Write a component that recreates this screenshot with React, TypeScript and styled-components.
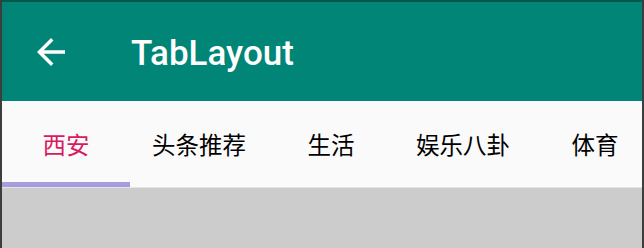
import React from "react";
import styled, { createGlobalStyle } from "styled-components";

const Global = createGlobalStyle`
  html, body { margin: 0; padding: 0; background: #cccccc; }
  body { font-family: Roboto, "Noto Sans CJK SC", sans-serif; }
`;

const Frame = styled.div`
  width: 644px;
  height: 248px;
  box-sizing: border-box;
  border-left: 2px solid #3d3d3d;
  border-right: 2px solid #3d3d3d;
  background: #cccccc;
  display: flex;
  flex-direction: column;
  overflow: hidden;
`;

const StatusStrip = styled.div`
  height: 2px;
  background: #00574b;
  flex: none;
`;

const Toolbar = styled.header`
  height: 99px;
  flex: none;
  background: #008577;
  display: flex;
  align-items: center;
  color: #ffffff;
`;

const NavButton = styled.div`
  width: 100px;
  height: 99px;
  display: flex;
  align-items: center;
  justify-content: center;
  padding-right: 2px;
  box-sizing: border-box;
`;

const Title = styled.h1`
  margin: 0 0 0 29px;
  font-family: Roboto, sans-serif;
  font-weight: 500;
  font-size: 35px;
  letter-spacing: 0;
  line-height: 1;
  padding-top: 4px;
`;

const TabBar = styled.nav`
  height: 86px;
  flex: none;
  background: #fafafa;
  border-bottom: 1px solid #e4e4e4;
  display: flex;
  overflow: hidden;
`;

const Tab = styled.div<{ $w: number; $active?: boolean }>`
  flex: none;
  width: ${(p) => p.$w}px;
  position: relative;
  display: flex;
  align-items: center;
  justify-content: center;
  font-family: "Noto Sans CJK SC", sans-serif;
  font-size: 23.5px;
  color: ${(p) => (p.$active ? "#d81b60" : "#000000")};
  white-space: nowrap;
  padding-bottom: 1px;
  box-sizing: border-box;
`;

const Indicator = styled.span`
  position: absolute;
  left: 0;
  right: 0;
  bottom: 0;
  height: 5px;
  background: #a99cde;
`;

const Content = styled.main`
  flex: 1;
  background: #cccccc;
`;

const tabs = [
  { label: "西安", w: 128 },
  { label: "头条推荐", w: 138 },
  { label: "生活", w: 126 },
  { label: "娱乐八卦", w: 138 },
  { label: "体育", w: 126 },
];

export default function App() {
  return (
    <>
      <Global />
      <Frame>
        <StatusStrip />
        <Toolbar>
          <NavButton>
            <svg width="42" height="42" viewBox="0 0 24 24" fill="#ffffff">
              <path d="M20 11H7.83l5.59-5.59L12 4l-8 8 8 8 1.41-1.41L7.83 13H20v-2z" />
            </svg>
          </NavButton>
          <Title>TabLayout</Title>
        </Toolbar>
        <TabBar>
          {tabs.map((t, i) => (
            <Tab key={t.label} $w={t.w} $active={i === 0}>
              {t.label}
              {i === 0 && <Indicator />}
            </Tab>
          ))}
        </TabBar>
        <Content />
      </Frame>
    </>
  );
}
